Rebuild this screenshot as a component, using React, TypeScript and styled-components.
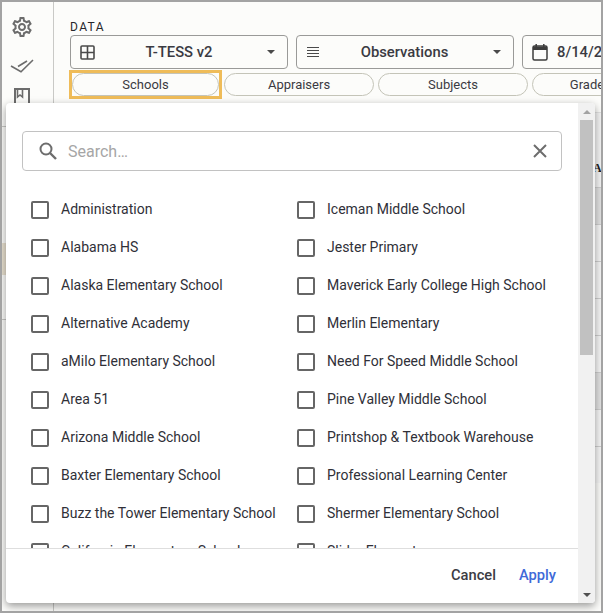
import React from "react";
import styled, { createGlobalStyle } from "styled-components";
import { MdOutlineSettings } from "react-icons/md";

const GlobalStyle = createGlobalStyle`
  html, body {
    margin: 0;
    padding: 0;
    background: #fff;
  }
  * {
    box-sizing: border-box;
  }
`;

// -------------------- PAGE -------------------- //

const Frame = styled.div`
  position: relative;
  width: 603px;
  height: 613px;
  border: 2px solid #a3a3a3;
  background: #fcfcfa;
  display: flex;
  overflow: hidden;
  font-family: Roboto, "Liberation Sans", sans-serif;
  color: #2d2d33;
`;

const Sidebar = styled.div`
  width: 52px;
  flex: none;
  border-right: 1px solid #c9c9c6;
  display: flex;
  flex-direction: column;
  align-items: center;
  padding: 14px 12px 0 0;
  color: #6c6c6c;
`;

const SideIcon = styled.div<{ $gap: number }>`
  height: 22px;
  flex: none;
  margin-bottom: ${({ $gap }) => $gap}px;
  display: flex;
  align-items: center;
  justify-content: center;
`;

const SideItem = styled.div<{ $height: number; $tint?: boolean; $line?: boolean }>`
  align-self: stretch;
  flex: none;
  height: ${({ $height }) => $height}px;
  margin-right: -12px;
  background: ${({ $tint }) => ($tint ? "#e9e1d0" : "transparent")};
  border-bottom: ${({ $line }) => ($line ? "1px solid #c9c9c6" : "none")};
`;

const Main = styled.div`
  flex: 1;
  min-width: 0;
  padding: 19px 0 0 16px;
  overflow: hidden;
`;

const DataLabel = styled.div`
  font-size: 12px;
  line-height: 13px;
  letter-spacing: 1.4px;
  color: #26262b;
`;

const SelectRow = styled.div`
  display: flex;
  gap: 8px;
  margin-top: 1px;
`;

const Select = styled.div`
  width: 218px;
  height: 34px;
  flex: none;
  border: 1px solid #9a9a98;
  border-radius: 4px;
  display: flex;
  align-items: center;
  padding: 0 9px;
  font-size: 14.8px;
  font-weight: 500;
  color: #3a3a42;
`;

const SelectText = styled.span<{ $left?: boolean }>`
  flex: 1;
  white-space: nowrap;
  text-align: ${({ $left }) => ($left ? "left" : "center")};
  padding-right: ${({ $left }) => ($left ? 0 : 4)}px;
  margin-left: ${({ $left }) => ($left ? 9 : 0)}px;
`;

const Caret = styled.span`
  width: 0;
  height: 0;
  margin-right: 3px;
  border-left: 4px solid transparent;
  border-right: 4px solid transparent;
  border-top: 4px solid #4a4a4a;
`;

const ChipRow = styled.div`
  display: flex;
  gap: 4px;
  margin-top: 4px;
  padding-left: 2px;
`;

const Chip = styled.div<{ $width: number }>`
  width: ${({ $width }) => $width}px;
  height: 23px;
  flex: none;
  border: 1px solid #c4c4b8;
  border-radius: 12px;
  display: flex;
  align-items: center;
  justify-content: center;
  font-size: 13px;
  white-space: nowrap;
  color: #3a3a42;
`;

// square focus ring drawn around the active chip, takes no room in the row
const FocusRing = styled.div`
  flex: none;
  margin: -3px -2px -3px -3px;
  border: 3px solid #efbc59;
`;

// -------------------- TABLE BEHIND THE POPOVER -------------------- //

const BackTable = styled.div`
  margin-top: 16px;
  width: 100%;
  border-top: 1px solid #e2e2e2;
  background: #f4f4f4;
`;

const BackHead = styled.div`
  height: 74px;
  padding: 48px 0 0 523px;
  font-family: "Liberation Serif", serif;
  font-weight: 700;
  font-size: 12px;
  line-height: 14px;
  white-space: nowrap;
  overflow: hidden;
  color: #222;
`;

const BackRow = styled.div<{ $shade?: boolean }>`
  height: 37px;
  border-top: 1px solid #cfcfcf;
  background: ${({ $shade }) => ($shade ? "#e2e2e2" : "#f6f6f6")};
`;

// -------------------- POPOVER -------------------- //

const Popover = styled.div`
  position: absolute;
  left: 4px;
  top: 101px;
  width: 589px;
  height: 500px;
  background: #fff;
  border-radius: 4px;
  box-shadow: 0 3px 8px rgba(0, 0, 0, 0.4);
  display: flex;
  overflow: hidden;
`;

const PopoverBody = styled.div`
  flex: 1;
  min-width: 0;
  display: flex;
  flex-direction: column;
`;

const SearchBox = styled.div`
  flex: none;
  height: 40px;
  margin: 28px 16px 0 16px;
  border: 1px solid #c2c2c2;
  border-radius: 4px;
  display: flex;
  align-items: center;
  padding: 0 13px 0 15px;
`;

const SearchHint = styled.span`
  flex: 1;
  margin-left: 10px;
  font-size: 16px;
  color: #a6a6a6;
`;

const ListArea = styled.div`
  flex: 1;
  min-height: 0;
  overflow: hidden;
  margin-top: 19px;
  padding-left: 25px;
  display: grid;
  grid-template-columns: 266px 1fr;
  grid-auto-rows: 38px;
`;

const Option = styled.div`
  display: flex;
  align-items: center;
  height: 38px;
  white-space: nowrap;
`;

const Box = styled.span`
  width: 18px;
  height: 18px;
  flex: none;
  margin-top: 2px;
  border: 2px solid #666;
  border-radius: 2px;
`;

const OptionText = styled.span`
  margin-left: 12px;
  font-size: 14px;
  color: #303038;
`;

const Footer = styled.div`
  flex: none;
  height: 53px;
  margin-bottom: 2px;
  border-top: 1px solid #dedede;
  display: flex;
  align-items: center;
  justify-content: flex-end;
  padding: 0 22px 0 0;
  gap: 23px;
`;

const FooterButton = styled.span<{ $primary?: boolean }>`
  font-size: 14.7px;
  font-weight: 500;
  color: ${({ $primary }) => ($primary ? "#3f6ad8" : "#3c3c44")};
`;

const ScrollTrack = styled.div`
  width: 17px;
  flex: none;
  background: #f1f1f1;
  display: flex;
  flex-direction: column;
  align-items: center;
`;

const ScrollButton = styled.div`
  height: 17px;
  flex: none;
  display: flex;
  align-items: center;
  justify-content: center;
`;

const ScrollArrow = styled.span<{ $down?: boolean }>`
  width: 0;
  height: 0;
  border-left: 4px solid transparent;
  border-right: 4px solid transparent;
  ${({ $down }) =>
    $down ? "border-top: 4px solid #505050;" : "border-bottom: 4px solid #a3a3a3;"}
`;

const ScrollThumb = styled.div`
  width: 13px;
  height: 235px;
  background: #c1c1c1;
`;

const ScrollGap = styled.div`
  flex: 1;
`;

// -------------------- ICONS -------------------- //

const DoubleCheckIcon = () => (
  <svg width="24" height="16" viewBox="0 0 24 16" fill="none" stroke="currentColor" strokeWidth="1.6">
    <path d="M1 8l10 5.7L23 2" />
    <path d="M8 8.5L17 3" />
  </svg>
);

const BookIcon = () => (
  <svg width="18" height="20" viewBox="0 0 18 20" fill="none" stroke="currentColor" strokeWidth="2">
    <path d="M2 20V2h14v18" />
    <path d="M4.5 2v8l2.5-2 2.5 2V2" strokeWidth="1.6" />
  </svg>
);

const GridIcon = () => (
  <svg width="15" height="15" viewBox="0 0 15 15" fill="none" stroke="#4a4a4a" strokeWidth="1.6">
    <rect x="1" y="1" width="13" height="13" rx="1" />
    <path d="M7.5 1v13M1 7.5h13" />
  </svg>
);

const LinesIcon = () => (
  <svg width="14" height="12" viewBox="0 0 14 12" fill="none" stroke="#4a4a4a" strokeWidth="1">
    <path d="M1 1.5h12M1 4.5h12M1 7.5h12M1 10.5h12" />
  </svg>
);

const CalendarIcon = () => (
  <svg width="16" height="18" viewBox="0 0 16 18" fill="none">
    <rect x="1" y="3" width="14" height="14" rx="1.5" stroke="#3c3c3c" strokeWidth="1.5" />
    <path d="M1 3.5h14V7H1z" fill="#3c3c3c" />
    <path d="M4.2 1v3M11.8 1v3" stroke="#3c3c3c" strokeWidth="1.5" />
  </svg>
);

const SearchIcon = () => (
  <svg width="20" height="20" viewBox="0 0 20 20" fill="none" stroke="#6d6d6d" strokeWidth="2">
    <circle cx="8" cy="8" r="5.5" />
    <path d="M12 12l6 6" strokeWidth="2.4" />
  </svg>
);

const CloseIcon = () => (
  <svg width="16" height="16" viewBox="0 0 16 16" fill="none" stroke="#6d6d6d" strokeWidth="2">
    <path d="M2 2l12 12M14 2L2 14" />
  </svg>
);

// -------------------- DATA -------------------- //

const leftSchools = [
  "Administration",
  "Alabama HS",
  "Alaska Elementary School",
  "Alternative Academy",
  "aMilo Elementary School",
  "Area 51",
  "Arizona Middle School",
  "Baxter Elementary School",
  "Buzz the Tower Elementary School",
  "California Elementary School",
];

const rightSchools = [
  "Iceman Middle School",
  "Jester Primary",
  "Maverick Early College High School",
  "Merlin Elementary",
  "Need For Speed Middle School",
  "Pine Valley Middle School",
  "Printshop & Textbook Warehouse",
  "Professional Learning Center",
  "Shermer Elementary School",
  "Slider Elementary",
];

// -------------------- MAIN COMPONENT -------------------- //

const App: React.FC = () => {
  const rows = leftSchools.flatMap((name, i) => [name, rightSchools[i]]);

  return (
    <Frame>
      <GlobalStyle />
      <Sidebar>
        <SideIcon $gap={17}>
          <MdOutlineSettings size={24} />
        </SideIcon>
        <SideIcon $gap={9}>
          <DoubleCheckIcon />
        </SideIcon>
        <SideIcon $gap={0}>
          <BookIcon />
        </SideIcon>
        <SideItem $height={19} $line />
        <SideItem $height={116} />
        <SideItem $height={32} $tint />
        <SideItem $height={45} $line />
      </Sidebar>
      <Main>
        <DataLabel>DATA</DataLabel>
        <SelectRow>
          <Select>
            <GridIcon />
            <SelectText>T-TESS v2</SelectText>
            <Caret />
          </Select>
          <Select>
            <LinesIcon />
            <SelectText>Observations</SelectText>
            <Caret />
          </Select>
          <Select>
            <CalendarIcon />
            <SelectText $left>8/14/2023 - 5/31/2024</SelectText>
          </Select>
        </SelectRow>
        <ChipRow>
          <FocusRing>
            <Chip $width={147}>Schools</Chip>
          </FocusRing>
          <Chip $width={150}>Appraisers</Chip>
          <Chip $width={150}>Subjects</Chip>
          <Chip $width={150}>Grade Levels</Chip>
        </ChipRow>
        <BackTable>
          <BackHead>Assigned</BackHead>
          <BackRow $shade />
          <BackRow />
          <BackRow />
          <BackRow />
          <BackRow />
          <BackRow $shade />
          <BackRow />
          <BackRow />
        </BackTable>
      </Main>
      <Popover>
        <PopoverBody>
          <SearchBox>
            <SearchIcon />
            <SearchHint>Search…</SearchHint>
            <CloseIcon />
          </SearchBox>
          <ListArea>
            {rows.map((name) => (
              <Option key={name}>
                <Box />
                <OptionText>{name}</OptionText>
              </Option>
            ))}
          </ListArea>
          <Footer>
            <FooterButton>Cancel</FooterButton>
            <FooterButton $primary>Apply</FooterButton>
          </Footer>
        </PopoverBody>
        <ScrollTrack>
          <ScrollButton>
            <ScrollArrow />
          </ScrollButton>
          <ScrollThumb />
          <ScrollGap />
          <ScrollButton>
            <ScrollArrow $down />
          </ScrollButton>
        </ScrollTrack>
      </Popover>
    </Frame>
  );
};

export default App;
